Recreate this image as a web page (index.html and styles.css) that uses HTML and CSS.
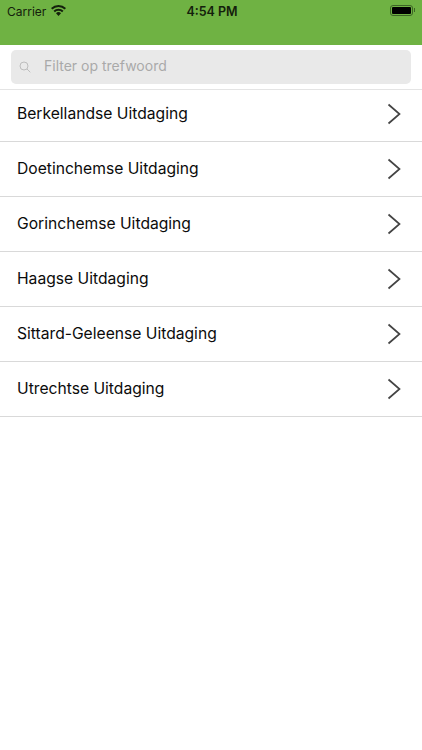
FILE: index.html
```html
<!DOCTYPE html>
<html lang="nl">
<head>
<meta charset="utf-8">
<title>Uitdagingen</title>
<link rel="stylesheet" href="styles.css">
</head>
<body>
<header class="top">
  <div class="status">
    <div class="status-left">
      <span>Carrier</span>
      <svg class="wifi" width="15" height="11" viewBox="0 0 15 11"><path d="M7.500 11 5 8.300a3.600 3.600 0 0 1 5 0zM3.900 7.200 2.500 5.700a7.100 7.100 0 0 1 10 0l-1.400 1.500a5.200 5.200 0 0 0-7.200 0zM1.300 4.500 0 3.100a10.800 10.800 0 0 1 15 0l-1.300 1.400a8.900 8.900 0 0 0-12.400 0z"/></svg>
    </div>
    <span class="time">4:54 PM</span>
    <div class="battery"><div class="battery-body"><div class="battery-fill"></div></div><div class="battery-tip"></div></div>
  </div>
</header>
<div class="search-wrap">
  <div class="search">
    <svg class="loupe" width="12" height="12" viewBox="0 0 12 12"><circle cx="5" cy="5" r="4"/><path d="M8 8l3.300 3.300"/></svg>
    <span class="placeholder">Filter op trefwoord</span>
  </div>
</div>
<ul class="list">
  <li class="row first"><span class="label">Berkellandse Uitdaging</span><svg class="chev" width="14" height="22" viewBox="0 0 14 22"><path d="M1.500 1.500 12.500 11 1.500 20.500"/></svg></li>
  <li class="row"><span class="label">Doetinchemse Uitdaging</span><svg class="chev" width="14" height="22" viewBox="0 0 14 22"><path d="M1.500 1.500 12.500 11 1.500 20.500"/></svg></li>
  <li class="row"><span class="label">Gorinchemse Uitdaging</span><svg class="chev" width="14" height="22" viewBox="0 0 14 22"><path d="M1.500 1.500 12.500 11 1.500 20.500"/></svg></li>
  <li class="row"><span class="label">Haagse Uitdaging</span><svg class="chev" width="14" height="22" viewBox="0 0 14 22"><path d="M1.500 1.500 12.500 11 1.500 20.500"/></svg></li>
  <li class="row"><span class="label">Sittard-Geleense Uitdaging</span><svg class="chev" width="14" height="22" viewBox="0 0 14 22"><path d="M1.500 1.500 12.500 11 1.500 20.500"/></svg></li>
  <li class="row"><span class="label">Utrechtse Uitdaging</span><svg class="chev" width="14" height="22" viewBox="0 0 14 22"><path d="M1.500 1.500 12.500 11 1.500 20.500"/></svg></li>
</ul>
</body>
</html>
```
FILE: styles.css
```css
* { box-sizing: border-box; }
html, body { margin: 0; padding: 0; }
body {
  width: 422px;
  height: 750px;
  background: #fff;
  overflow: hidden;
  font-family: Inter, "Liberation Sans", sans-serif;
  color: #111;
}
.top { height: 45px; background: #6fb243; }
.status {
  height: 23px;
  display: grid;
  grid-template-columns: 1fr auto 1fr;
  align-items: center;
  padding: 0 7px;
  font-size: 12px;
  color: #14200c;
}
.status-left { display: flex; align-items: center; gap: 5px; }
.wifi { fill: #14200c; margin-top: -3px; }
.time { font-weight: 600; font-size: 12.500px; margin-left: 2px; }
.battery { justify-self: end; display: flex; align-items: center; gap: 1px; margin-top: -3px; }
.battery-body {
  width: 23px;
  height: 11px;
  border: 1px solid #3d6426;
  border-radius: 3px;
  padding: 1px;
}
.battery-fill { height: 100%; background: #000; border-radius: 1px; }
.battery-tip { width: 1px; height: 4px; background: #3d6426; }
.search-wrap { padding: 5px 11px 0; height: 44px; }
.search {
  height: 34px;
  background: #e9e9e9;
  border-radius: 5px;
  display: flex;
  align-items: center;
  padding-left: 8px;
  gap: 13px;
  font-size: 14px;
  color: #a9a9a9;
}
.placeholder { padding-bottom: 3px; }
.loupe { fill: none; stroke: #bdbdbd; stroke-width: 1; flex: none; }
.list { list-style: none; margin: 0; padding: 0; border-top: 1px solid #e4e4e4; }
.row {
  height: 55px;
  display: flex;
  align-items: center;
  justify-content: space-between;
  padding: 0 21px 0 17px;
  border-bottom: 1px solid #d9d9d9;
  font-size: 15.650px;
  color: #0b0b0b;
}
.row.first { height: 52px; padding-bottom: 3px; }
.label { padding-bottom: 2px; }
.chev { fill: none; stroke: #444; stroke-width: 1.700; flex: none; }
```
